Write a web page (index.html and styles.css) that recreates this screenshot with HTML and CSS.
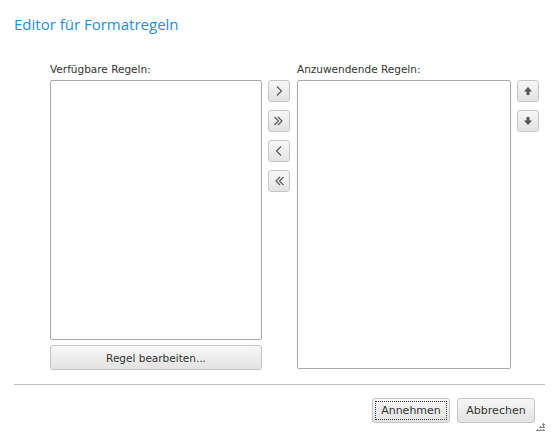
FILE: index.html
```html
<!DOCTYPE html>
<html>
<head>
    <title>Editor für Formatregeln</title>
    <link rel="stylesheet" href="styles.css">
</head>
<body>
    <div class="dialog">
        <h1 class="title">Editor für Formatregeln</h1>

        <div class="editor">
            <div class="column left-column">
                <label class="list-label">Verfügbare Regeln:</label>
                <select class="rule-list available" multiple></select>
                <button class="btn edit-button">Regel bearbeiten...</button>
            </div>

            <div class="move-buttons">
                <button class="btn icon-button" title="Hinzufügen">
                    <svg width="10" height="12" viewBox="0 0 10 12"><path d="M3 1.5 L7.5 6 L3 10.5" fill="none" stroke="#555" stroke-width="1.1"/></svg>
                </button>
                <button class="btn icon-button" title="Alle hinzufügen">
                    <svg width="12" height="12" viewBox="0 0 12 12"><path d="M1.5 2 L5.5 6 L1.5 10 M5 2 L9 6 L5 10" fill="none" stroke="#555" stroke-width="1.1"/></svg>
                </button>
                <button class="btn icon-button" title="Entfernen">
                    <svg width="10" height="12" viewBox="0 0 10 12"><path d="M7 1.5 L2.5 6 L7 10.5" fill="none" stroke="#555" stroke-width="1.1"/></svg>
                </button>
                <button class="btn icon-button" title="Alle entfernen">
                    <svg width="12" height="12" viewBox="0 0 12 12"><path d="M10.5 2 L6.5 6 L10.5 10 M7 2 L3 6 L7 10" fill="none" stroke="#555" stroke-width="1.1"/></svg>
                </button>
            </div>

            <div class="column right-column">
                <label class="list-label">Anzuwendende Regeln:</label>
                <select class="rule-list applied" multiple></select>
            </div>

            <div class="order-buttons">
                <button class="btn icon-button" title="Nach oben">
                    <svg width="10" height="10" viewBox="0 0 10 10"><path d="M5 1 L9 5.5 L6.5 5.5 L6.5 9 L3.5 9 L3.5 5.5 L1 5.5 Z" fill="#555"/></svg>
                </button>
                <button class="btn icon-button" title="Nach unten">
                    <svg width="10" height="10" viewBox="0 0 10 10"><path d="M5 9 L9 4.5 L6.5 4.5 L6.5 1 L3.5 1 L3.5 4.5 L1 4.5 Z" fill="#555"/></svg>
                </button>
            </div>
        </div>

        <div class="footer">
            <button class="btn footer-button default">Annehmen</button>
            <button class="btn footer-button">Abbrechen</button>
        </div>
        <div class="grip">
            <svg width="9" height="9" viewBox="0 0 9 9" fill="#888">
                <rect x="7" y="0" width="1" height="1"/><rect x="6" y="1" width="3" height="1"/><rect x="7" y="2" width="1" height="1"/>
                <rect x="4" y="3" width="1" height="1"/><rect x="3" y="4" width="3" height="1"/><rect x="7" y="3" width="1" height="1"/><rect x="6" y="4" width="3" height="1"/>
                <rect x="1" y="6" width="1" height="1"/><rect x="0" y="7" width="3" height="1"/><rect x="4" y="6" width="1" height="1"/><rect x="3" y="7" width="3" height="1"/><rect x="7" y="6" width="1" height="1"/><rect x="6" y="7" width="3" height="1"/>
            </svg>
        </div>
    </div>
</body>
</html>
```

FILE: styles.css
```css
body {
    font-family: Tahoma, "DejaVu Sans", sans-serif;
    margin: 0;
    background-color: #fff;
    color: #333;
}

.dialog {
    position: relative;
    width: 559px;
    height: 446px;
    box-sizing: border-box;
    padding: 14px 14px 0 14px;
}

.title {
    margin: 0;
    font-family: "Open Sans", "DejaVu Sans", sans-serif;
    font-size: 15px;
    font-weight: normal;
    color: #1e8fd9;
    line-height: 20px;
}

.editor {
    display: flex;
    align-items: flex-start;
    margin-top: 28px;
    padding-left: 36px;
}

.column {
    display: flex;
    flex-direction: column;
}

.left-column {
    width: 212px;
}

.right-column {
    width: 214px;
}

.list-label {
    font-size: 10.5px;
    line-height: 14px;
    height: 14px;
    margin-bottom: 4px;
    color: #333;
}

.rule-list {
    box-sizing: border-box;
    border: 1px solid #a9a9a9;
    background-color: #fff;
    margin: 0;
    padding: 0;
    outline: none;
}

.available {
    width: 212px;
    height: 260px;
}

.applied {
    width: 214px;
    height: 289px;
}

.btn {
    box-sizing: border-box;
    border: 1px solid #c6c6c6;
    border-radius: 3px;
    background: linear-gradient(#f7f7f7, #e3e3e3);
    font-family: Tahoma, "DejaVu Sans", sans-serif;
    font-size: 10.5px;
    color: #333;
    padding: 0;
    cursor: pointer;
}

.btn:hover {
    background: linear-gradient(#fdfdfd, #eaeaea);
}

.edit-button {
    margin-top: 5px;
    width: 212px;
    height: 25px;
}

.move-buttons,
.order-buttons {
    display: flex;
    flex-direction: column;
    gap: 8px;
    margin-top: 18px;
}

.move-buttons {
    margin-left: 6px;
    margin-right: 7px;
}

.order-buttons {
    margin-left: 6px;
}

.icon-button {
    width: 22px;
    height: 22px;
    display: flex;
    align-items: center;
    justify-content: center;
}

.icon-button svg {
    display: block;
}

.footer {
    display: flex;
    justify-content: flex-end;
    gap: 7px;
    margin-top: 14px;
    padding-top: 13px;
    padding-right: 10px;
    border-top: 1px solid #c0c0c0;
}

.footer-button {
    width: 78px;
    height: 25px;
    font-size: 11px;
}

.footer-button.default {
    outline: 1px dotted #333;
    outline-offset: -4px;
}

.grip {
    position: absolute;
    right: 14px;
    bottom: 14px;
    line-height: 0;
}
```
